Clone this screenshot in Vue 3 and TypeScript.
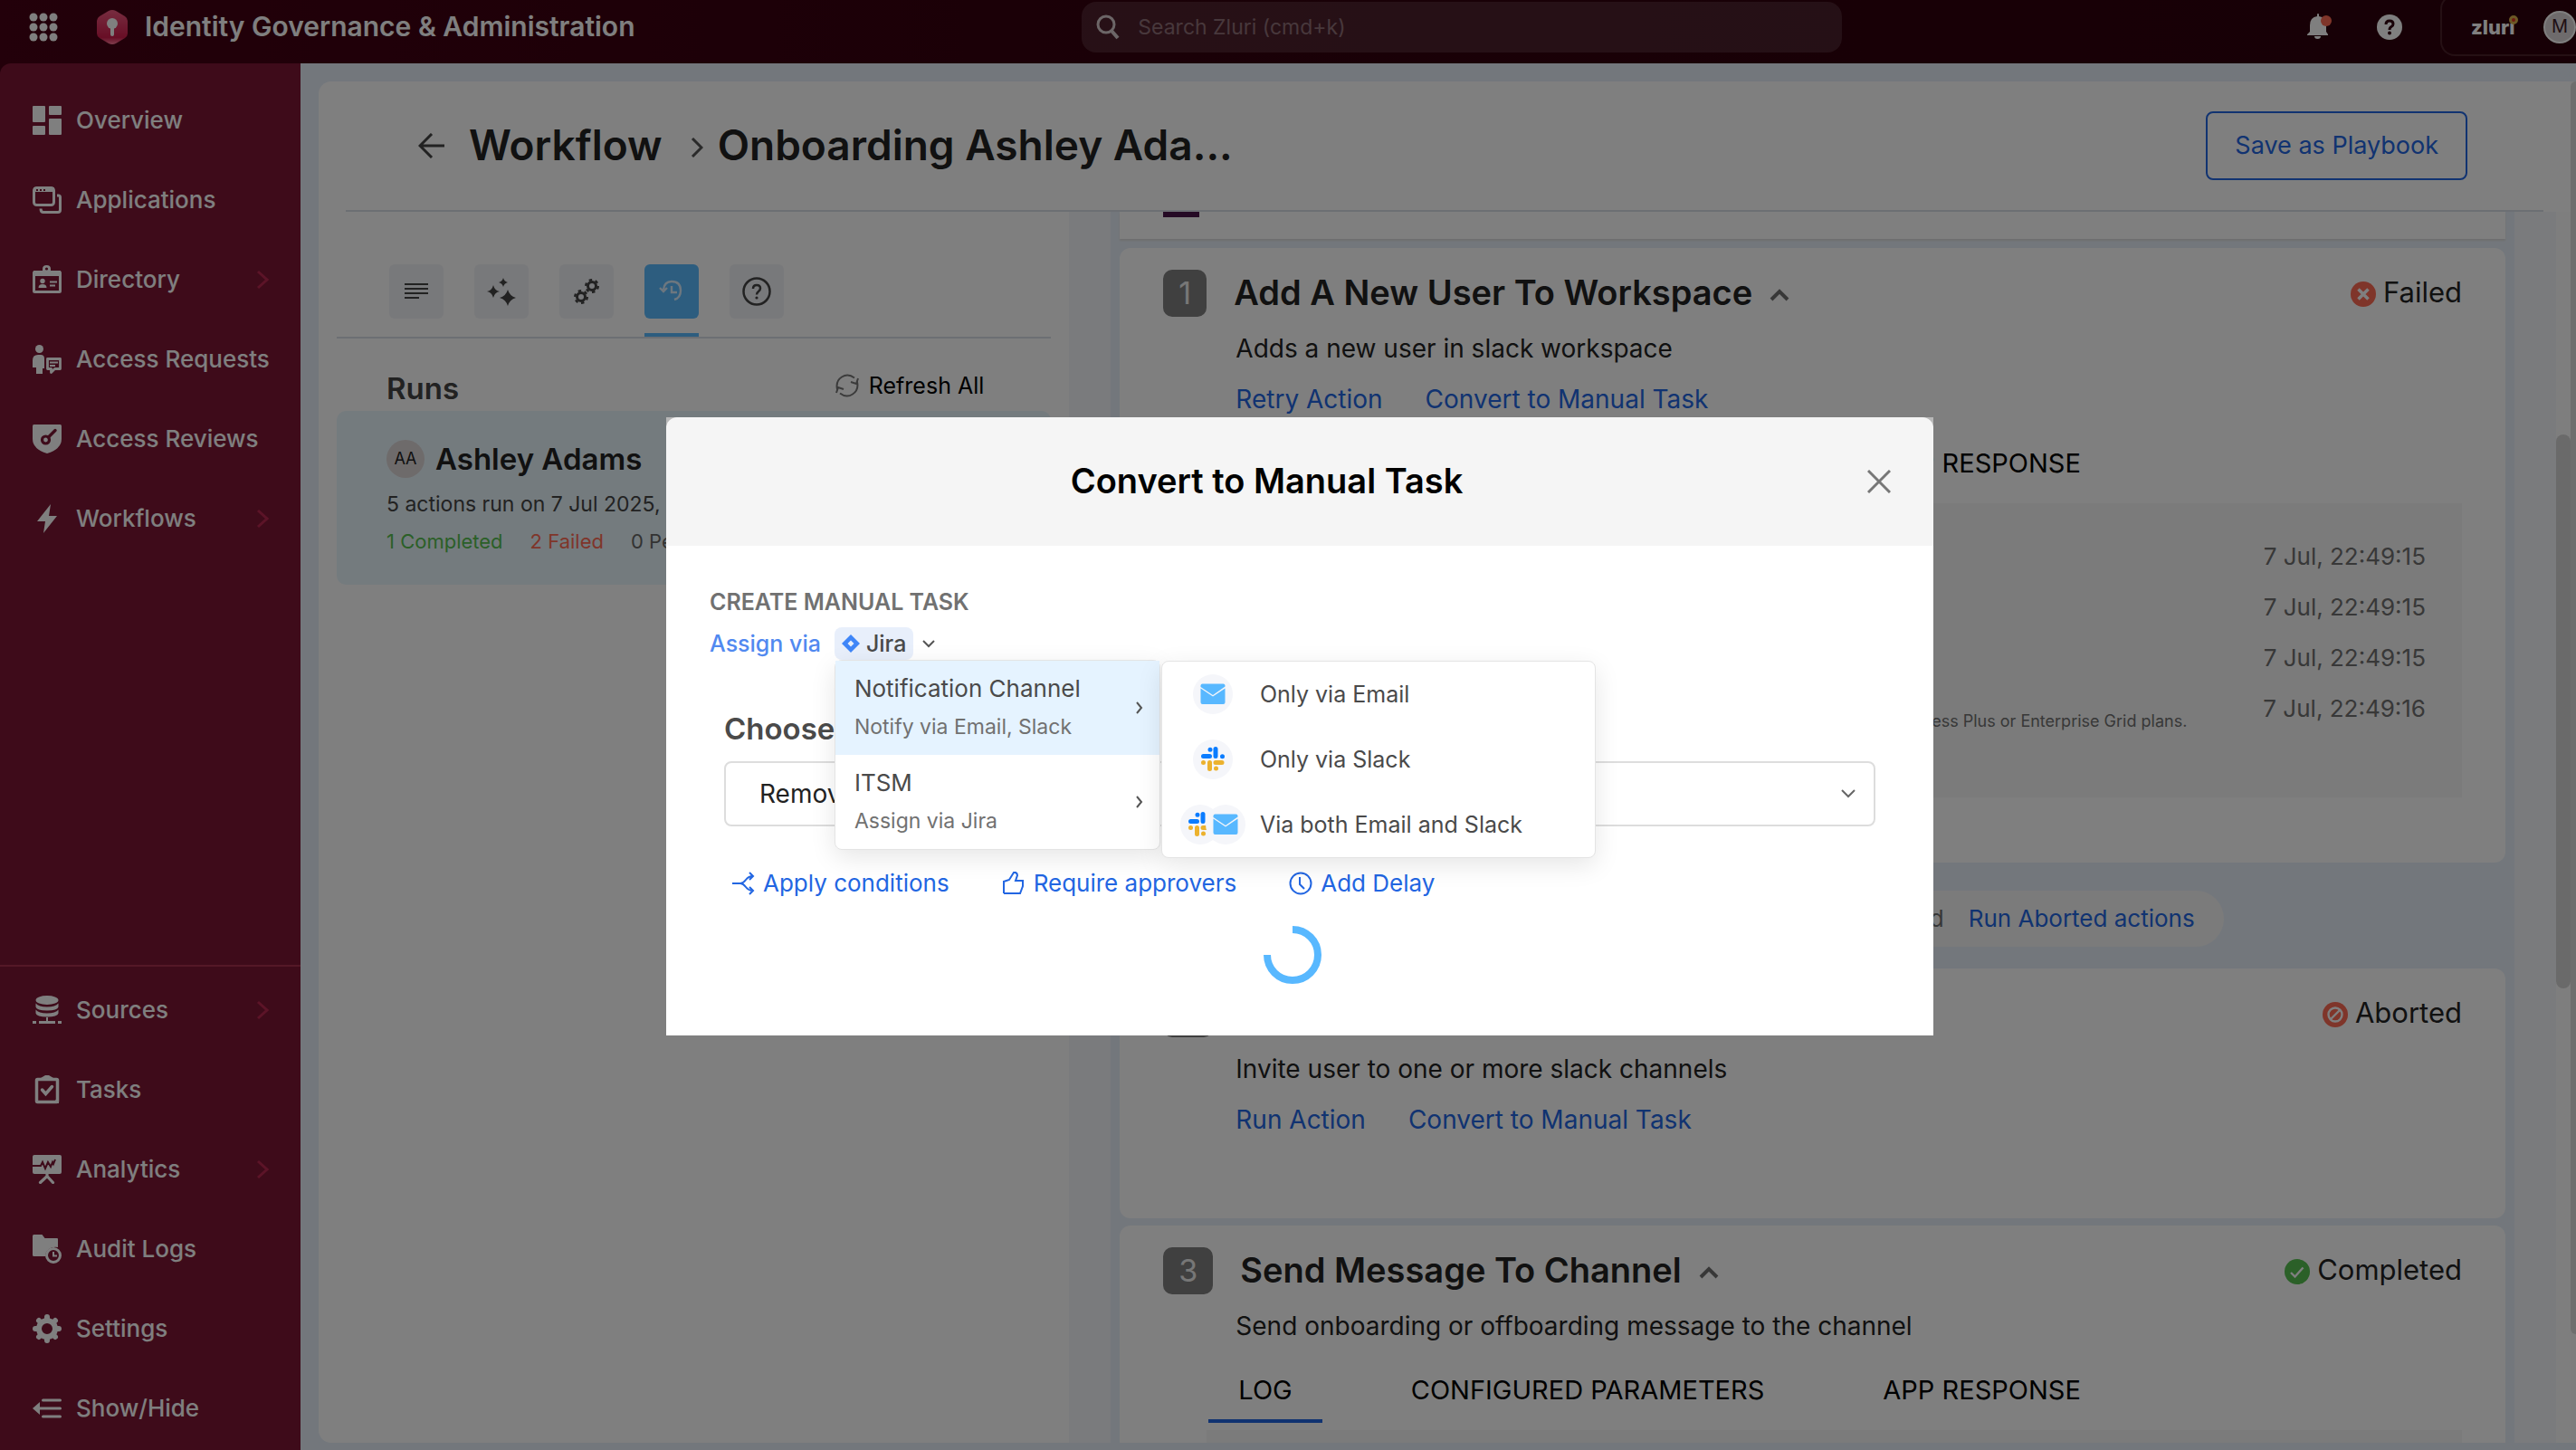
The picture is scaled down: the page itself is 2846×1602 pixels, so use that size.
<script setup lang="ts">
import { ref } from 'vue'

interface NavItem { label: string; icon: string; expandable?: boolean }
interface Step {
  id: number
  title: string
  description: string
  links: string[]
  status: 'Failed' | 'Aborted' | 'Completed'
  log: string[]
  note?: string
  tabs: boolean
}

const bg = '#7c1634'

const primaryNav: NavItem[] = [
  { label: 'Overview', icon: '<path d="M1 0h12q1 0 1 1v16q0 1-1 1H1q-1 0-1-1V1q0-1 1-1zM1 22h12q1 0 1 1v8q0 1-1 1H1q-1 0-1-1v-8q0-1 1-1zM19 0h12q1 0 1 1v8q0 1-1 1H19q-1 0-1-1V1q0-1 1-1zM19 14h12q1 0 1 1v16q0 1-1 1H19q-1 0-1-1V15q0-1 1-1z"/>' },
  { label: 'Applications', icon: '<rect x="1.500" y="2.500" width="22" height="19" rx="3" fill="none" stroke="currentColor" stroke-width="3"/><path d="M1 2h23v5H1z"/><path d="M4 4h2v2H4zM8 4h2v2H8zM12 4h2v2h-2z" fill="' + bg + '"/><path d="M27 11h1.500q2 0 2 2v14q0 2.500-2.500 2.500H12q-3 0-3-4" fill="none" stroke="currentColor" stroke-width="3"/>' },
  { label: 'Directory', expandable: true, icon: '<rect x="1.500" y="7.500" width="29" height="22" rx="1" fill="none" stroke="currentColor" stroke-width="3"/><path d="M1 6h30v6H1zM11 10V4q0-4 4.500-4T20 4v6z"/><circle cx="15.500" cy="4" r="1.600" fill="' + bg + '"/><circle cx="11" cy="17.500" r="2.700"/><path d="M6.500 25q0-4 4.500-4t4.500 4zM19 17.500h8v2h-8zM19 21.500h6v2h-6z"/>' },
  { label: 'Access Requests', icon: '<circle cx="7.500" cy="4.500" r="4.500"/><path d="M6 11h3q4 0 4 4v11h-2v6H4v-7H0v-8q0-6 6-6z"/><path d="M16.500 15.500h14v11h-6l-4 4v-4h-4z" fill="none" stroke="currentColor" stroke-width="2.800" stroke-linejoin="round"/><path d="M19 18.500h9v2h-9zM19 22h6v2h-6z"/>' },
  { label: 'Access Reviews', icon: '<path d="M1.500 0h29Q32 0 32 1.500V16q0 11-16 16Q0 27 0 16V1.500Q0 0 1.500 0z"/><circle cx="14.500" cy="17" r="4" fill="none" stroke="' + bg + '" stroke-width="3.200"/><path d="M17.500 14L25 6.500" stroke="' + bg + '" stroke-width="3.400" stroke-linecap="round"/>' },
  { label: 'Workflows', expandable: true, icon: '<path d="M20 0L5 19h9l-2 13 15-19h-9z"/>' },
]

const secondaryNav: NavItem[] = [
  { label: 'Sources', expandable: true, icon: '<ellipse cx="16" cy="5" rx="12.500" ry="5"/><path d="M3.500 8.500q3 4 12.500 4t12.500-4v4q-1 4-12.500 4t-12.500-4zM3.500 15.500q3 4 12.500 4t12.500-4v4q-1 4-12.500 4t-12.500-4zM15 24h2v4h8v3H7v-3h8zM0 28h4v3H0zM28 28h4v3h-4z"/>' },
  { label: 'Tasks', icon: '<rect x="4.500" y="4.500" width="23" height="25" rx="1" fill="none" stroke="currentColor" stroke-width="3.500"/><path d="M9 3l5-3h4l5 3v3H9zM29 20v11H17q10 0 10-9z"/><path d="M10.500 16l4 4.500 7-8" fill="none" stroke="currentColor" stroke-width="3.500" stroke-linecap="round"/>' },
  { label: 'Analytics', expandable: true, icon: '<rect width="32" height="21" rx="2"/><path d="M0 12h9l2-4 3 7 3-7 3 5 2-5 1 2 2-5" fill="none" stroke="' + bg + '" stroke-width="2"/><path d="M8.500 30.500l7.500-7 6.500 7M16 20v4" fill="none" stroke="currentColor" stroke-width="3.200" stroke-linecap="round"/>' },
  { label: 'Audit Logs', icon: '<path d="M1.500 0h9l3 4H27q1 0 1 1v9q-6-1-10 2t-4 8H1.500Q0 24 0 22.500v-21Q0 0 1.500 0z"/><circle cx="23" cy="23" r="7.500" fill="none" stroke="currentColor" stroke-width="3"/><path d="M23 19v4.500h4" fill="none" stroke="currentColor" stroke-width="2"/>' },
  { label: 'Settings', icon: '<circle cx="16" cy="16" r="9" fill="none" stroke="currentColor" stroke-width="6"/><path d="M16 3v3M16 26v3M3 16h3M26 16h3M7 7l2 2M23 23l2 2M7 25l2-2M23 9l2-2" stroke="currentColor" stroke-width="6" stroke-linecap="round"/>' },
  { label: 'Show/Hide', icon: '<path d="M0 16l8-7v14z"/><path d="M11.500 7h19M7 16h23.500M11.500 25h19" stroke="currentColor" stroke-width="3" stroke-linecap="round"/>' },
]

const panelTabs = [
  { label: 'Details', icon: '<path d="M3 8h26M3 13h26M3 18h26M3 23h16" stroke="currentColor" stroke-width="2"/>' },
  { label: 'Suggestions', icon: '<path d="M18 1q1 4 5 5-4 1-5 5-1-4-5-5 4-1 5-5zM7 9q1.500 6 7 7-5.500 1-7 7-1.500-6-7-7 5.500-1 7-7zM23 14q2 7 9 9-7 2-9 9-2-7-9-9 7-2 9-9z" fill="currentColor"/>' },
  { label: 'Configuration', icon: '<g fill="none" stroke="currentColor"><circle cx="10" cy="22" r="4.500" stroke-width="3"/><circle cx="10" cy="22" r="6.800" stroke-width="2.400" stroke-dasharray="3.500 3.620"/><circle cx="22" cy="10" r="4.500" stroke-width="3"/><circle cx="22" cy="10" r="6.800" stroke-width="2.400" stroke-dasharray="3.500 3.620"/></g>' },
  { label: 'Runs', icon: '<path d="M7 14q1-9 9-9 10 0 10 10 0 8-7 10M3 12l4 4 4-4M16 10v7h6" fill="none" stroke="currentColor" stroke-width="2.400"/>' },
  { label: 'Help', icon: '<circle cx="16" cy="16" r="14.500" fill="none" stroke="currentColor" stroke-width="2.500"/><path d="M12 13q0-4 4-4t4 3.500q0 2-2 3.500t-2 3.500" fill="none" stroke="currentColor" stroke-width="2.500"/><circle cx="16" cy="23" r="1.600" fill="currentColor"/>' },
]
const activeTab = ref('Runs')

const steps: Step[] = [
  {
    id: 1, title: 'Add A New User To Workspace', description: 'Adds a new user in slack workspace',
    links: ['Retry Action', 'Convert to Manual Task'], status: 'Failed', tabs: true,
    log: ['7 Jul, 22:49:15', '7 Jul, 22:49:15', '7 Jul, 22:49:15', '7 Jul, 22:49:16'],
    note: 'Available only on Business Plus or Enterprise Grid plans.',
  },
  {
    id: 2, title: 'Invite User To Channels', description: 'Invite user to one or more slack channels',
    links: ['Run Action', 'Convert to Manual Task'], status: 'Aborted', tabs: false, log: [],
  },
  {
    id: 3, title: 'Send Message To Channel', description: 'Send onboarding or offboarding message to the channel',
    links: [], status: 'Completed', tabs: true, log: [''],
  },
]
const responseTabs = ['LOG', 'CONFIGURED PARAMETERS', 'APP RESPONSE']

const channels = [
  { title: 'Notification Channel', hint: 'Notify via Email, Slack' },
  { title: 'ITSM', hint: 'Assign via Jira' },
]
const targets = [
  { label: 'Only via Email', icons: ['mail'] },
  { label: 'Only via Slack', icons: ['slack'] },
  { label: 'Via both Email and Slack', icons: ['slack', 'mail'] },
]
const glyphs: Record<string, string> = {
  mail: '<path d="M8.500 12.500q0-2 2-2h23q2 0 2 2v1L22 23 8.500 14z" fill="#58b8ff"/><path d="M8.500 15.500L22 24.500 35.500 15.500V31q0 2-2 2h-23q-2 0-2-2z" fill="#58b8ff"/>',
  slack: '<g stroke-width="5" stroke-linecap="round"><path d="M11.500 18.500h7M25 18.500v-8M19 11.300v.010M32.500 18.800v.010" stroke="#0a7cff"/><path d="M25 25.500h7M18.500 25.500v7M11.500 25.500h.010M25.500 32h.010" stroke="#ecb22e"/></g>',
}

const taskActions = [
  { label: 'Apply conditions', icon: '<path d="M1 13h9M10 13q3 0 6-4t8-4M10 13q3 0 6 4t8 4M20 1l4 4-4 4M20 17l4 4-4 4"/>' },
  { label: 'Require approvers', icon: '<path d="M2 10v14M2 24h18l3-8v-6h-8l2-6q0-2-2-3h-2l-5 8-6 2"/>' },
  { label: 'Add Delay', icon: '<circle cx="13" cy="13" r="11.500"/><path d="M12 6v8l5 5"/>' },
]
const selectedAction = ref('remove')
</script>

<template>
  <div class="app">
    <header class="topbar">
      <div class="brand">
        <button class="plain" aria-label="Apps">
          <svg width="32" height="32" viewBox="0 0 32 32" fill="#fff"><circle v-for="n in 9" :key="n" :cx="5 + ((n - 1) % 3) * 11" :cy="5 + Math.floor((n - 1) / 3) * 11" r="4.500" /></svg>
        </button>
        <svg class="hex" width="36" height="40" viewBox="0 0 36 40">
          <defs><linearGradient id="hex" x1="0" y1="0" x2="0" y2="1"><stop offset="0" stop-color="#ef5a80" /><stop offset=".8" stop-color="#d01c4c" /><stop offset="1" stop-color="#ff7d9c" /></linearGradient></defs>
          <path d="M18 1q2 0 4 1l10 6q3 2 3 5v14q0 3-3 5l-10 6q-4 2-8 0L4 32q-3-2-3-5V13q0-3 3-5l10-6q2-1 4-1z" fill="url(#hex)" />
          <circle cx="18" cy="16" r="6" fill="#fff" /><path d="M18 18v10" stroke="#fff" stroke-width="4" stroke-linecap="round" />
        </svg>
        <span class="product">Identity Governance &amp; Administration</span>
      </div>
      <label class="search">
        <svg width="26" height="28" viewBox="0 0 26 28" fill="none" stroke="#d8cccf" stroke-width="3"><circle cx="11" cy="11" r="9" /><path d="M17 18l7 8" stroke-width="4" /></svg>
        <input type="search" aria-label="Search" placeholder="Search Zluri (cmd+k)" />
      </label>
      <div class="tools">
        <button class="plain bell" aria-label="Notifications">
          <svg width="30" height="30" viewBox="0 0 30 30"><path d="M13 1q0-1 1-1t1 1v2q8 1 8 10v7l2 3v1H2v-1l3-3v-7q0-9 8-10zM10 25h7q0 3-3.500 3T10 25z" fill="#fff" /><circle cx="23" cy="8" r="6" fill="#ff6b54" /></svg>
        </button>
        <button class="plain help" aria-label="Help">
          <svg width="28" height="28" viewBox="0 0 28 28"><circle cx="14" cy="14" r="14" fill="#fff" /><path d="M10 11q0-4 4-4t4 3.500q0 2-2 3t-2 3.500" fill="none" stroke="#30000e" stroke-width="3" /><circle cx="14" cy="20.500" r="2" fill="#30000e" /></svg>
        </button>
        <div class="account">
          <span class="zluri">zluri<i></i></span>
          <span class="me">M</span>
        </div>
      </div>
    </header>

    <div class="body">
      <nav class="sidebar" aria-label="Main">
        <div class="nav-group">
          <a v-for="item in primaryNav" :key="item.label" href="#" class="nav-item">
            <svg width="32" height="32" viewBox="0 0 32 32" fill="currentColor" v-html="item.icon" />
            <span>{{ item.label }}</span>
            <svg v-if="item.expandable" class="more" width="14" height="22" viewBox="0 0 14 22"><path d="M2 2l10 9-10 9" /></svg>
          </a>
        </div>
        <div class="nav-group lower">
          <a v-for="item in secondaryNav" :key="item.label" href="#" class="nav-item">
            <svg width="32" height="32" viewBox="0 0 32 32" fill="currentColor" v-html="item.icon" />
            <span>{{ item.label }}</span>
            <svg v-if="item.expandable" class="more" width="14" height="22" viewBox="0 0 14 22"><path d="M2 2l10 9-10 9" /></svg>
          </a>
        </div>
      </nav>

      <main class="main">
        <section class="page">
          <div class="page-head">
            <button class="plain back" aria-label="Back">
              <svg width="30" height="28" viewBox="0 0 30 28"><path d="M15 1L2 14l13 13M2 14h27" fill="none" stroke="#444" stroke-width="3" /></svg>
            </button>
            <h1>Workflow</h1>
            <svg class="sep" width="14" height="22" viewBox="0 0 14 22"><path d="M2 1l10 10-10 10" fill="none" stroke="#555" stroke-width="3" /></svg>
            <h1>Onboarding Ashley Ada...</h1>
            <button class="save">Save as Playbook</button>
          </div>

          <div class="columns">
            <aside class="runs">
              <div class="panel-tabs" role="tablist">
                <button v-for="t in panelTabs" :key="t.label" role="tab" :aria-label="t.label" :aria-selected="t.label === activeTab" :class="['panel-tab', { active: t.label === activeTab }]" @click="activeTab = t.label">
                  <span class="tile"><svg width="32" height="32" viewBox="0 0 32 32" v-html="t.icon" /></span>
                </button>
              </div>
              <div class="runs-head">
                <h2>Runs</h2>
                <button class="plain refresh">
                  <svg width="28" height="26" viewBox="0 0 28 26" fill="none" stroke="#777" stroke-width="2"><path d="M3 17Q1 8 8 3.500t14 1M25 9q2 9-5 13.500t-14-1M26 5l-2 6-6-2M2 21l2-6 6 2" /></svg>
                  Refresh All
                </button>
              </div>
              <article class="run">
                <div class="run-user"><span class="avatar">AA</span><h3>Ashley Adams</h3></div>
                <p class="run-meta">5 actions run on 7 Jul 2025, 22:49</p>
                <p class="run-stats"><span class="ok">1 Completed</span><span class="bad">2 Failed</span><span>0 Pending</span></p>
              </article>
            </aside>

            <div class="gutter"></div>

            <div class="steps">
              <article class="card first"><div class="app-mark"></div></article>
              <template v-for="step in steps" :key="step.id">
                <div v-if="step.id === 2" class="aborted-pill">
                  <span>The remaining actions were aborted</span>
                  <a href="#">Run Aborted actions</a>
                </div>
                <article :class="['card', 'step-' + step.id]">
                  <div class="card-head">
                    <span class="badge">{{ step.id }}</span>
                    <h2>{{ step.title }}</h2>
                    <svg class="fold" width="22" height="14" viewBox="0 0 22 14"><path d="M2 12l9-9 9 9" fill="none" stroke="#707070" stroke-width="4" /></svg>
                    <span class="status">
                      <svg width="28" height="28" viewBox="0 0 28 28" fill="none">
                        <circle cx="14" cy="14" r="14" :fill="step.status === 'Completed' ? '#56c050' : '#ff6b54'" />
                        <path v-if="step.status === 'Failed'" d="M8.500 8.500l11 11M19.500 8.500l-11 11" stroke="#fff" stroke-width="3.500" />
                        <template v-else-if="step.status === 'Aborted'"><circle cx="14" cy="14" r="7.500" stroke="#fff" stroke-width="2.400" /><path d="M9 19L19 9" stroke="#fff" stroke-width="2.400" /></template>
                        <path v-else d="M7 15l4.500 4.500 9-10" stroke="#fff" stroke-width="2.400" />
                      </svg>
                      {{ step.status }}
                    </span>
                  </div>
                  <p class="desc">{{ step.description }}</p>
                  <div v-if="step.links.length" class="links"><a v-for="l in step.links" :key="l" href="#">{{ l }}</a></div>
                  <template v-if="step.tabs">
                    <div class="tabs" role="tablist">
                      <button v-for="(t, i) in responseTabs" :key="t" role="tab" :aria-selected="i === 0" :class="{ on: i === 0 }">{{ t }}</button>
                    </div>
                    <div class="log">
                      <div v-for="(time, i) in step.log" :key="i" class="log-row">
                        <span class="note">{{ i === step.log.length - 1 ? step.note : '' }}</span>
                        <time>{{ time }}</time>
                      </div>
                    </div>
                  </template>
                </article>
              </template>
            </div>

            <div class="gutter"></div>
            <div class="track"><div class="thumb"></div></div>
          </div>
        </section>
        <div class="page-track"><div class="page-thumb"></div></div>
      </main>
    </div>

    <div class="overlay">
      <div class="modal" role="dialog" aria-modal="true" aria-labelledby="dialog-title">
        <div class="modal-head">
          <h2 id="dialog-title">Convert to Manual Task</h2>
          <button class="plain close" aria-label="Close"><svg width="26" height="26" viewBox="0 0 26 26"><path d="M1 1l24 24M25 1L1 25" stroke="#777" stroke-width="3" /></svg></button>
        </div>
        <div class="modal-body">
          <h3 class="eyebrow">CREATE MANUAL TASK</h3>
          <div class="assign">
            <span class="assign-label">Assign via</span>
            <div class="assign-menu">
              <button class="plain picker" aria-haspopup="menu" aria-expanded="true">
                <span class="chip">
                  <svg width="20" height="20" viewBox="0 0 20 20"><path d="M10 0l10 10-10 10L0 10z" fill="#3f86f8" /><path d="M10 6.500l3.500 3.500-3.500 3.500L6.500 10z" fill="#e8effb" /></svg>
                  Jira
                </span>
                <svg width="14" height="9" viewBox="0 0 14 9"><path d="M1 1l6 6 6-6" fill="none" stroke="#555" stroke-width="2" /></svg>
              </button>
              <div class="menus">
                <div class="menu" role="menu">
                  <button v-for="(c, i) in channels" :key="c.title" role="menuitem" :class="['menu-item', { hover: i === 0 }]">
                    <span><b>{{ c.title }}</b><small>{{ c.hint }}</small></span>
                    <svg width="8" height="14" viewBox="0 0 8 14"><path d="M1 1l5 6-5 6" fill="none" stroke="#555" stroke-width="2" /></svg>
                  </button>
                </div>
                <div class="submenu" role="menu">
                  <button v-for="t in targets" :key="t.label" role="menuitem" class="target">
                    <span class="icons"><svg v-for="i in t.icons" :key="i" width="44" height="44" viewBox="0 0 44 44"><circle cx="22" cy="22" r="22" fill="#f5f6fa" /><g v-html="glyphs[i]" /></svg></span>
                    {{ t.label }}
                  </button>
                </div>
              </div>
            </div>
          </div>
          <label class="choose" for="action">Choose an action</label>
          <div class="select">
            <select id="action" v-model="selectedAction"><option value="remove">Remove user from workspace</option></select>
            <svg width="16" height="10" viewBox="0 0 16 10"><path d="M1 1l7 7 7-7" fill="none" stroke="#666" stroke-width="2" /></svg>
          </div>
          <div class="task-actions">
            <button v-for="a in taskActions" :key="a.label" class="plain">
              <svg width="26" height="26" viewBox="0 0 26 26" fill="none" stroke="currentColor" stroke-width="2" v-html="a.icon" />
              {{ a.label }}
            </button>
          </div>
          <svg class="spinner" width="64" height="64" viewBox="0 0 64 64"><path d="M32 4a28 28 0 1 1-28 28" fill="none" stroke="#58b8ff" stroke-width="8" /></svg>
        </div>
      </div>
    </div>
  </div>
</template>

<style>
html, body { margin: 0; background: #e7eff9; }
</style>

<style scoped>
* { box-sizing: border-box; }
h1, h2, h3, p { margin: 0; font-weight: 600; }
h1, h2 { padding-bottom: 3px; }
a { text-decoration: none; color: #2266e2; }
button, input, select { font: inherit; color: inherit; margin: 0; }
button { cursor: pointer; white-space: nowrap; }
svg { display: block; flex: none; }
.plain { border: 0; background: none; padding: 0; }
.app { display: flex; flex-direction: column; height: 100vh; overflow: hidden; background: #e7eff9; color: #222; font-family: Inter, "Liberation Sans", sans-serif; font-size: 26px; line-height: 40px; }

/* Top bar */
.topbar { flex: none; display: flex; align-items: center; height: 70px; background: linear-gradient(90deg, #460014, #34000e 45%, #2e000c); color: #fff; }
.brand { flex: none; width: 42%; display: flex; align-items: center; padding: 0 0 10px 32px; }
.hex { margin-left: 42px; }
.product { margin-left: 18px; padding-bottom: 2px; font-size: 30px; font-weight: 600; white-space: nowrap; }
.search { width: 29.5%; height: 56px; margin-bottom: 10px; padding: 0 16px; display: flex; align-items: center; gap: 18px; border-radius: 16px; background: rgba(255, 255, 255, 0.13); }
.search input { flex: 1; min-width: 0; border: 0; outline: 0; background: none; font-size: 23px; }
.search input::placeholder { color: #907078; opacity: 1; }
.tools { flex: 1; display: flex; align-items: center; justify-content: flex-end; height: 70px; padding-bottom: 10px; }
.help { margin: 0 42px 0 49px; }
.account { display: flex; align-items: center; justify-content: space-between; width: 150px; height: 68px; margin-bottom: 4px; padding: 4px 0 0 32px; border: 2px solid #4a2029; border-right: 0; border-radius: 16px 0 0 16px; }
.zluri { position: relative; font-size: 22px; font-weight: 800; }
.zluri i { position: absolute; top: 7px; right: -3px; width: 10px; height: 10px; border-radius: 50%; border: 3px solid #d8b04a; background: #e03020; }
.me { width: 36px; height: 36px; border-radius: 50%; border: 2px solid #fff; background: #ddd6d8; color: #40202a; font-size: 20px; line-height: 30px; text-align: center; }

/* Sidebar */
.body { flex: 1; min-height: 0; display: flex; background: linear-gradient(90deg, #460014 100px, transparent 100px); }
.sidebar { flex: none; width: 332px; display: flex; flex-direction: column; justify-content: space-between; background: #7c1634; border-top-left-radius: 12px; color: #fff; }
.nav-group { padding-top: 19px; }
.lower { padding: 4px 0 2px; border-top: 2px solid #a8304f; }
.nav-item { display: flex; align-items: center; height: 88px; padding: 0 35px 0 36px; color: #fff; font-weight: 500; font-size: 26px; }
.nav-item span { margin-left: 16px; white-space: nowrap; }
.more { margin-left: auto; fill: none; stroke: #b82850; stroke-width: 3; }

/* Page */
.main { flex: 1; min-width: 0; display: flex; padding: 20px 0 8px 20px; }
.page { flex: 1; min-width: 0; display: flex; flex-direction: column; background: #fff; border-radius: 14px 0 0 14px; overflow: hidden; }
.page-track { flex: none; width: 6px; background: #fafafa; }
.page-thumb { height: 92%; background: #dcdcdc; border-radius: 6px 0 0 6px; }
.page-head { flex: none; display: flex; align-items: center; height: 144px; margin: 0 30px; padding: 0 84px 0 80px; border-bottom: 2px solid #d8dfe6; }
.page-head h1 { font-size: 46px; color: #222; white-space: nowrap; }
.back { margin-right: 26px; }
.sep { margin: 4px 16px 0 31px; }
.save { margin-left: auto; height: 76px; padding: 0 30px; border: 2px solid #2266e2; border-radius: 8px; background: none; color: #2266e2; font-size: 27px; }
.columns { flex: 1; min-height: 0; display: flex; }
.runs { flex: none; width: 33.333%; padding: 58px 20px 0; }
.gutter { flex: none; width: 46px; background: #f4f6fa; }
.track { flex: none; width: 16px; padding-top: 246px; background: #fdfdfd; }
.thumb { height: 612px; border-radius: 8px; background: #d4d4d4; }

/* Runs panel */
.panel-tabs { display: flex; gap: 34px; padding: 0 58px; border-bottom: 2px solid #d8dfe6; }
.panel-tab { width: 60px; padding: 0 0 16px; border: 0; border-bottom: 4px solid transparent; background: none; color: #444; }
.tile { display: flex; align-items: center; justify-content: center; height: 60px; border-radius: 6px; background: #f1f2f6; }
.panel-tab.active { border-color: #5abaff; color: #dbeeff; }
.active .tile { background: #5abaff; }
.runs-head { display: flex; align-items: center; justify-content: space-between; height: 80px; padding: 32px 74px 0 55px; }
.runs-head h2 { font-size: 33px; color: #444; }
.refresh { display: flex; align-items: center; gap: 10px; padding-bottom: 9px; font-size: 25px; color: #000; }
.run { padding: 32px 55px 34px; border-radius: 10px; background: #e9f6fd; }
.run-user { display: flex; align-items: center; gap: 12px; height: 42px; }
.run-user h3 { font-size: 33px; }
.avatar { width: 42px; height: 42px; border-radius: 50%; background: #ddd6d6; font-size: 18px; line-height: 42px; text-align: center; }
.run-meta { margin-top: 13px; font-size: 23px; line-height: 32px; font-weight: 400; color: #444; white-space: nowrap; }
.run-stats { display: flex; gap: 30px; margin-top: 11px; font-size: 22px; line-height: 28px; font-weight: 400; color: #666; }
.ok { color: #56c050; }
.bad { color: #ff6b54; }

/* Steps */
.steps { flex: 1; min-width: 0; display: flex; flex-direction: column; padding: 0 10px; background: #e7eff9; overflow: hidden; }
.card { flex: none; background: #fff; border-radius: 12px; padding: 24px 48px 72px; }
.card.first { height: 30px; padding: 0 48px; border-radius: 0; margin-bottom: 10px; box-shadow: 0 2px 2px #dcdcdc; }
.app-mark { width: 40px; height: 6px; background: #4a154b; }
.step-2 { min-height: 276px; margin-bottom: 8px; }
.card-head { display: flex; align-items: center; height: 52px; }
.badge { height: 52px; padding: 0 17px; border-radius: 10px; background: #808080; color: #eee; font-size: 34px; line-height: 52px; }
.card-head h2 { margin-left: 30px; font-size: 38px; white-space: nowrap; }
.fold { margin: 4px 0 0 19px; }
.status { margin-left: auto; display: flex; align-items: center; gap: 8px; padding-bottom: 2px; font-size: 31px; }
.status svg { margin-top: 4px; }
.desc { margin: 15px 0 0 80px; font-size: 28px; font-weight: 400; }
.links { display: flex; gap: 47px; margin: 16px 0 0 80px; font-size: 28px; }
.tabs { display: flex; gap: 65px; margin: 17px 0 0 50px; }
.tabs button { height: 70px; padding: 2px 33px 0; border: 0; border-bottom: 4px solid transparent; background: none; color: #000; font-size: 29px; }
.tabs .on { border-color: #2266e2; }
.log { margin: 8px 0 0 48px; padding: 31px 40px 70px; background: #f7f7f7; color: #707070; }
.log-row { display: flex; align-items: center; height: 56px; }
.note { flex: 1; padding: 28px 84px 0 0; text-align: right; font-size: 18px; }
.aborted-pill { flex: none; align-self: center; display: flex; align-items: center; justify-content: flex-end; gap: 27px; width: 908px; height: 62px; margin: 31px 0 24px; padding: 0 32px; border-radius: 31px; background: #f6f6f6; color: #707070; }

/* Dialog */
.overlay { position: fixed; inset: 0; display: flex; align-items: center; justify-content: center; padding: 3px 0 0 26px; background: rgba(0, 0, 0, 0.5); }
.modal { width: 1400px; background: #b8b8b8; }
.modal-head { display: flex; align-items: center; height: 142px; padding-right: 47px; border-radius: 12px 12px 0 0; background: #f5f5f5; }
.modal-head h2 { flex: 1; text-align: center; font-size: 38px; color: #000; }
.modal-body { padding: 46px 48px 57px; background: #fff; }
.eyebrow { font-size: 25px; line-height: 32px; color: #717171; }
.assign { display: flex; align-items: center; gap: 15px; height: 36px; margin-top: 12px; font-size: 25px; font-weight: 500; color: #4a4a4a; }
.assign-label { color: #5189f0; }
.assign-menu { position: relative; }
.picker { display: flex; align-items: center; gap: 10px; }
.chip { display: flex; align-items: center; gap: 7px; height: 36px; padding: 0 8px; border-radius: 8px; background: #e8effb; }
.menus { position: absolute; top: 36px; left: 0; z-index: 1; display: flex; align-items: flex-start; gap: 1px; font-weight: 400; }
.menu, .submenu { border: 1px solid #e4e4e4; border-radius: 8px; background: #fff; box-shadow: 0 8px 28px rgba(0, 0, 0, 0.1); }
.menu { width: 360px; }
.submenu { width: 480px; margin-top: 1px; }
.menu-item { display: flex; align-items: center; justify-content: space-between; width: 100%; height: 104px; padding: 0 18px 0 21px; border: 0; background: none; text-align: left; }
.menu-item.hover { background: #e5f3ff; }
.menu-item b, .menu-item small { display: block; line-height: 42px; font-weight: 400; }
.menu-item b { font-size: 26px; }
.menu-item small { font-size: 23px; color: #717171; }
.target { display: flex; align-items: center; width: 100%; height: 72px; padding: 0 18px; border: 0; background: none; font-size: 25px; }
.icons { display: flex; justify-content: center; width: 76px; margin-right: 14px; }
.icons svg + svg { margin-left: -16px; }
.choose { display: block; margin: 56px 0 0 16px; font-size: 33px; font-weight: 600; color: #4a4a4a; }
.select { display: flex; align-items: center; margin: 16px 16px 0; border: 2px solid #ddd; border-radius: 8px; }
.select select { flex: 1; height: 68px; padding: 0 37px; border: 0; background: none; appearance: none; font-size: 28px; color: #222; }
.select svg { margin-right: 20px; }
.task-actions { display: flex; gap: 58px; margin: 43px 0 0 24px; color: #2266e2; }
.task-actions button { display: flex; align-items: center; gap: 9px; }
.spinner { margin: 27px auto 0 612px; }
</style>
